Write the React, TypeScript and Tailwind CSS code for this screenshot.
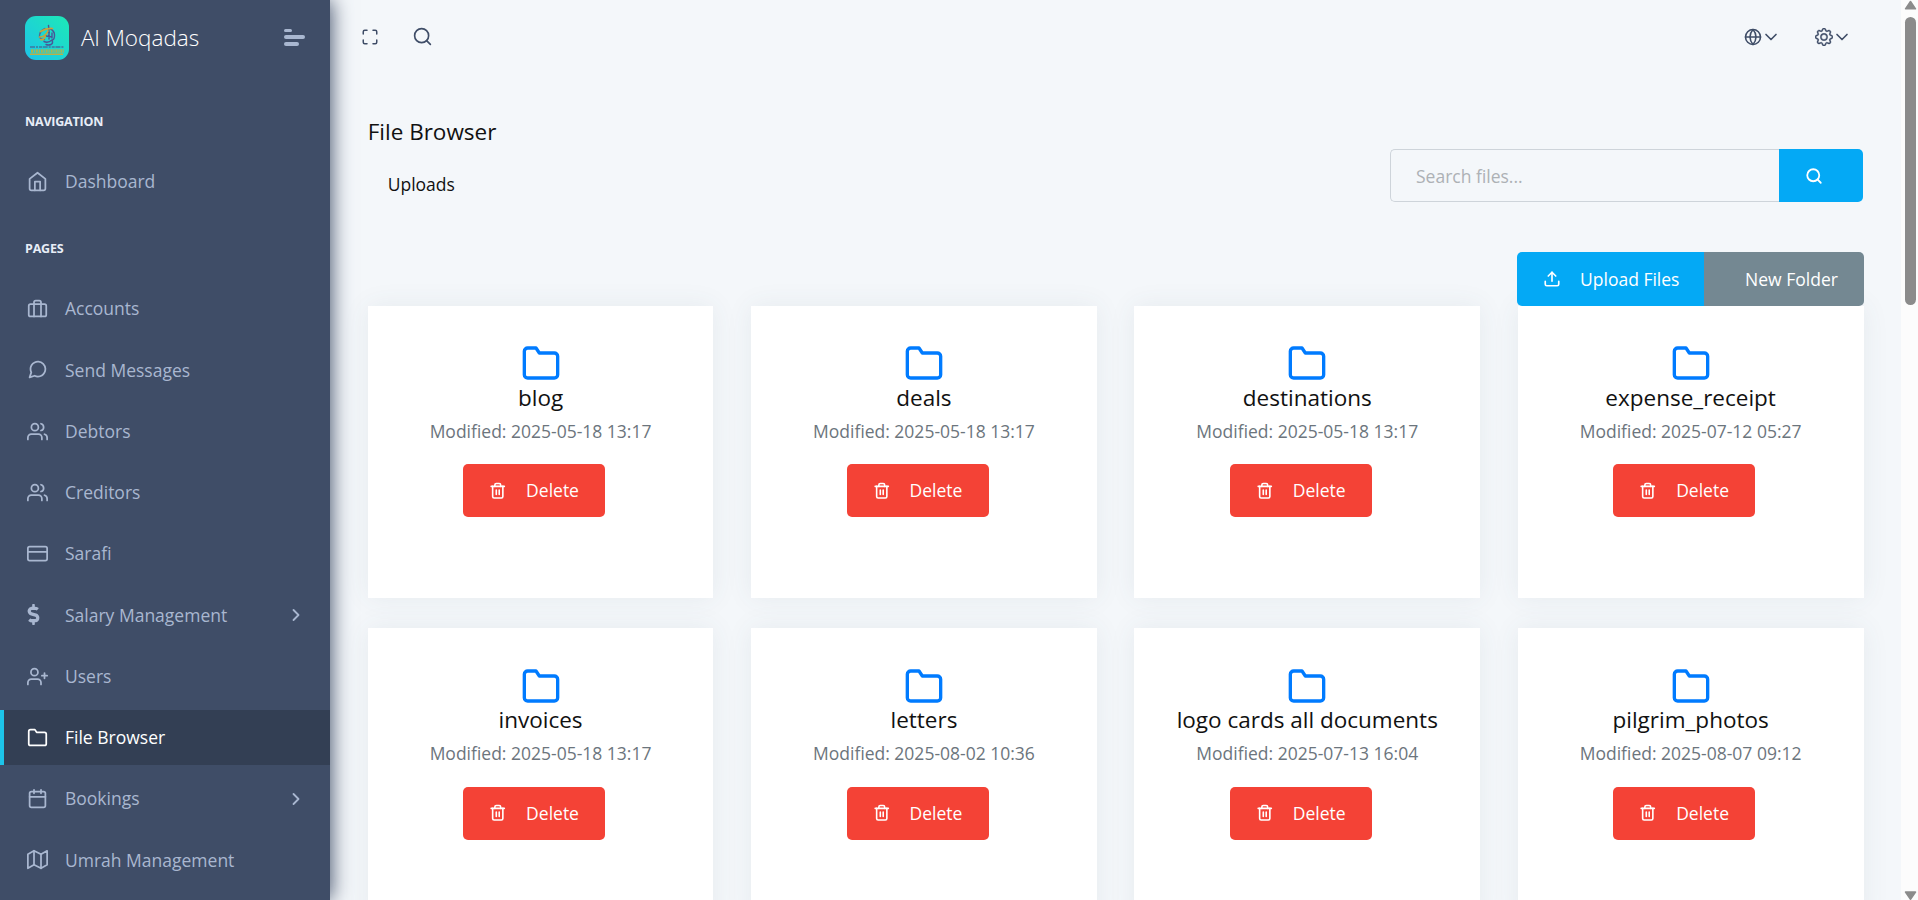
import React from "react";
import {
  FiHome, FiBriefcase, FiMessageCircle, FiUsers, FiCreditCard, FiUserPlus, FiFolder, FiCalendar, FiMap,
  FiChevronRight, FiChevronDown, FiSearch, FiMaximize, FiGlobe, FiUpload, FiTrash2,
} from "react-icons/fi";
import { FaDollarSign } from "react-icons/fa";
import { BsGear } from "react-icons/bs";

type IconType = React.ComponentType<{ size?: number | string; className?: string; strokeWidth?: number | string }>;
type NavEntry = { label: string; icon: IconType; active?: boolean; expandable?: boolean };

const pages: NavEntry[] = [
  { label: "Accounts", icon: FiBriefcase },
  { label: "Send Messages", icon: FiMessageCircle },
  { label: "Debtors", icon: FiUsers },
  { label: "Creditors", icon: FiUsers },
  { label: "Sarafi", icon: FiCreditCard },
  { label: "Salary Management", icon: FaDollarSign, expandable: true },
  { label: "Users", icon: FiUserPlus },
  { label: "File Browser", icon: FiFolder, active: true },
  { label: "Bookings", icon: FiCalendar, expandable: true },
  { label: "Umrah Management", icon: FiMap },
];

const folders = [
  { name: "blog", modified: "2025-05-18 13:17" },
  { name: "deals", modified: "2025-05-18 13:17" },
  { name: "destinations", modified: "2025-05-18 13:17" },
  { name: "expense_receipt", modified: "2025-07-12 05:27" },
  { name: "invoices", modified: "2025-05-18 13:17" },
  { name: "letters", modified: "2025-08-02 10:36" },
  { name: "logo cards all documents", modified: "2025-07-13 16:04" },
  { name: "pilgrim_photos", modified: "2025-08-07 09:12" },
];

function Logo() {
  return (
    <svg viewBox="0 0 44 44" className="h-11 w-11 shrink-0">
      <defs>
        <linearGradient id="logo-bg" x1="0" y1="1" x2="1" y2="0">
          <stop offset="0" stopColor="#1dc4e9" />
          <stop offset="1" stopColor="#1de9b6" />
        </linearGradient>
      </defs>
      <rect width="44" height="44" rx="11" fill="url(#logo-bg)" />
      <g fill="none" strokeLinecap="round" strokeWidth="1.4">
        <path d="M23.500 9.500l.5 7M24.500 12.500q5 2 5 6.500t-2 5" stroke="#4a5597" />
        <path d="M20 12.500q-6 3-5.500 8.500 1.500 3 5 2.500" stroke="#4a6f9a" />
        <path d="M15.500 15.500q6-3.500 12-3M14.500 21q6 0 8.500-6" stroke="#c7a43a" strokeWidth="1.700" />
        <path d="M21 20l6 1M24 16.500v6.500M27 17v5M19 25.500q4 2 8-1.500 1.500 3-1 4.500-2.500 1-5 0" stroke="#4a5597" />
        <path d="M15.500 23.500q3.500 1 5-3.500" stroke="#c7a43a" />
      </g>
      <g fill="none">
        <path d="M5 31h34" stroke="#3f76a0" strokeWidth="1.600" strokeDasharray="5 1 2 1 3 .7" />
        <path d="M6 35h33" stroke="#a8b554" strokeWidth="3.400" strokeDasharray="2 .8 1.300 .8" />
        <path d="M5 38.200h33" stroke="#bfae45" strokeWidth="1.600" />
      </g>
    </svg>
  );
}

function NavLink({ label, icon: Icon, active, expandable }: NavEntry) {
  return (
    <a
      className={
        active
          ? "flex h-[55px] items-center border-l-4 border-[#1dc4e9] bg-[#333f54] pr-6 pl-[23px] text-white"
          : "flex h-[55px] items-center pr-6 pl-[27px] text-[#a9b7d0]"
      }
    >
      <span className="flex w-[38px] shrink-0 items-center">
        <Icon size={21} className={Icon === FaDollarSign ? "-ml-[4.500px]" : ""} />
      </span>
      <span className="grow whitespace-nowrap">{label}</span>
      {expandable && <FiChevronRight size={20} strokeWidth={2.200} />}
    </a>
  );
}

function Sidebar() {
  return (
    <aside className="relative z-10 flex h-full w-[330px] shrink-0 flex-col overflow-visible bg-[#3f4d67] shadow-[1px_0_20px_0_#3f4d67]">
      <div className="flex h-[75px] shrink-0 items-center pr-[25px] pl-[25px]">
        <Logo />
        <span className="ml-3 grow text-[22.500px] font-light text-white">Al Moqadas</span>
        <span className="flex w-[21px] flex-col gap-[3px]">
          <i className="h-[3px] w-2 rounded-sm bg-[#a9b7d0]" />
          <i className="h-1 w-[21px] rounded-sm bg-[#a9b7d0]" />
          <i className="h-1 w-[15px] rounded-sm bg-[#a9b7d0]" />
        </span>
      </div>
      <h6 className="mt-[37px] h-[19px] pl-[25px] text-[12.500px] leading-[19px] font-bold tracking-[-0.2px] text-[#e8edf7]">NAVIGATION</h6>
      <nav className="mt-[23px]">
        <NavLink label="Dashboard" icon={FiHome} />
      </nav>
      <h6 className="mt-[30px] h-[19px] pl-[25px] text-[12.500px] leading-[19px] font-bold tracking-[-0.2px] text-[#e8edf7]">PAGES</h6>
      <nav className="mt-[23px] flex flex-col gap-[6.250px]">
        {pages.map((p) => (
          <NavLink key={p.label} {...p} />
        ))}
      </nav>
    </aside>
  );
}

function TopBar() {
  return (
    <header className="flex h-[74px] shrink-0 items-center justify-between pr-[49px] pl-[31px] text-[#3f4d67]">
      <div className="flex items-center gap-[33px]">
        <FiMaximize size={18} />
        <FiSearch size={21} strokeWidth={1.900} className="-mt-px" />
      </div>
      <div className="flex items-center gap-[34px]">
        <span className="flex items-center">
          <FiGlobe size={18} strokeWidth={2.100} />
          <FiChevronDown size={20} strokeWidth={2} className="-ml-px" />
        </span>
        <span className="flex items-center">
          <BsGear size={18} stroke="currentColor" strokeWidth={0.400} />
          <FiChevronDown size={20} strokeWidth={2} className="-ml-px" />
        </span>
      </div>
    </header>
  );
}

function FolderCard({ name, modified }: { name: string; modified: string }) {
  return (
    <article className="flex h-[292.200px] flex-col items-center bg-white pt-[37.200px] shadow-[0_0_25px_0_rgba(69,90,100,0.08)]">
      <FiFolder size={40} className="text-[#007bff]" />
      <h5 className="-mt-[0.200px] h-[29px] text-[22.500px] leading-[29px] whitespace-nowrap text-[#111]">{name}</h5>
      <p className="mt-[6px] h-[26px] leading-[26px] whitespace-nowrap text-[#6c757d]">Modified: {modified}</p>
      <button className="mt-[20.200px] mr-[12.500px] flex h-[53px] w-[142px] items-center rounded-[5px] bg-[#f44236] pl-[26px] text-white">
        <FiTrash2 size={17.5} strokeWidth={2.200} />
        <span className="mb-[0.600px] ml-[19.300px]">Delete</span>
      </button>
    </article>
  );
}

function Scrollbar() {
  return (
    <div className="flex h-full w-[17px] shrink-0 flex-col items-center bg-[#fcfcfc] text-[#8b8b8b]">
      <svg viewBox="0 0 17 17" className="h-[17px] w-[17px]">
        <path d="M9.500 1.500l5 7.300h-10z" fill="currentColor" stroke="currentColor" strokeLinejoin="round" strokeWidth="1.500" />
      </svg>
      <div className="ml-[2px] h-[288px] w-[11px] rounded-full bg-[#8b8b8b]" />
      <svg viewBox="0 0 17 17" className="mt-auto h-[17px] w-[17px]">
        <path d="M9.500 16.200l5-7.200h-10z" fill="currentColor" stroke="currentColor" strokeLinejoin="round" strokeWidth="1.500" />
      </svg>
    </div>
  );
}

export default function App() {
  return (
    <div className="flex h-[900px] w-full overflow-hidden bg-[#f4f7fa] font-['Open_Sans',sans-serif] text-[17.500px] text-[#111]">
      <Sidebar />
      <main className="flex min-w-0 grow flex-col">
        <TopBar />
        <div className="pr-[37.500px] pl-[37.700px]">
          <div className="flex h-[178px] justify-between">
            <div className="pt-[43px]">
              <h5 className="h-[30px] text-[22.500px] leading-[30px]">File Browser</h5>
              <p className="mt-[24px] ml-5 leading-[26px]">Uploads</p>
            </div>
            <div className="mt-[75px] mr-px flex h-[53px]">
              <div className="flex w-[389px] items-center rounded-l-[5px] border border-r-0 border-[#ced4da] pt-px pl-[25.500px] text-[#adb1b5]">
                Search files...
              </div>
              <button className="flex w-[84px] items-center rounded-r-[5px] bg-[#04a9f5] pt-px pl-[26px] text-white">
                <FiSearch size={18} strokeWidth={2.400} />
              </button>
            </div>
          </div>
          <div className="relative z-[1] flex h-[54px] justify-end text-white">
            <button className="flex w-[187px] items-center rounded-l-[5px] bg-[#04a9f5] pl-[26px]">
              <FiUpload size={18} strokeWidth={2.200} />
              <span className="ml-[19.500px] whitespace-nowrap">Upload Files</span>
            </button>
            <button className="w-[160px] rounded-r-[5px] bg-[#748892] pl-[16px] whitespace-nowrap">New Folder</button>
          </div>
          <div className="grid grid-cols-4 gap-x-[37.600px] gap-y-[30.250px]">
            {folders.map((f) => (
              <FolderCard key={f.name} {...f} />
            ))}
          </div>
        </div>
      </main>
      <Scrollbar />
    </div>
  );
}
